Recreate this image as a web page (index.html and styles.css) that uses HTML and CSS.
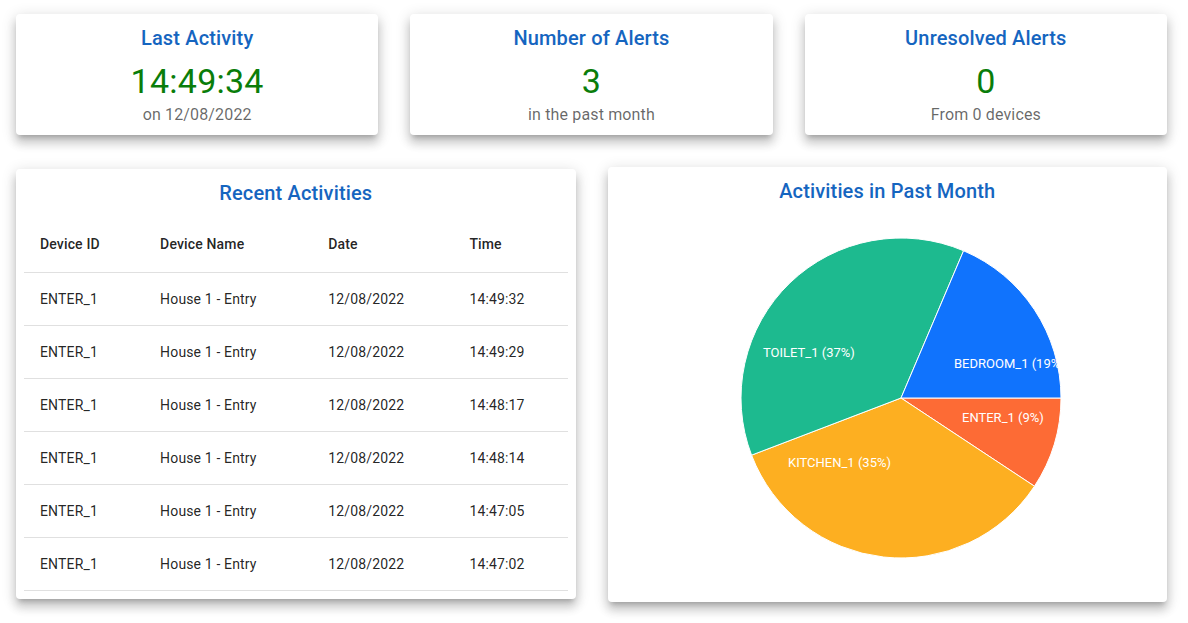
FILE: index.html
```html
<!DOCTYPE html>
<html lang="en">
<head>
<meta charset="utf-8">
<title>Dashboard</title>
<link rel="stylesheet" href="styles.css">
</head>
<body>
<div class="page">
  <section class="stats">
    <div class="card stat">
      <h2 class="card-title">Last Activity</h2>
      <div class="stat-value">14:49:34</div>
      <div class="stat-sub">on 12/08/2022</div>
    </div>
    <div class="card stat">
      <h2 class="card-title">Number of Alerts</h2>
      <div class="stat-value">3</div>
      <div class="stat-sub">in the past month</div>
    </div>
    <div class="card stat">
      <h2 class="card-title">Unresolved Alerts</h2>
      <div class="stat-value">0</div>
      <div class="stat-sub">From 0 devices</div>
    </div>
  </section>

  <section class="panels">
    <div class="card table-card">
      <h2 class="card-title">Recent Activities</h2>
      <table class="activity-table">
        <colgroup>
          <col class="c1"><col class="c2"><col class="c3"><col class="c4">
        </colgroup>
        <thead>
          <tr><th>Device ID</th><th>Device Name</th><th>Date</th><th>Time</th></tr>
        </thead>
        <tbody>
          <tr><td>ENTER_1</td><td>House 1 - Entry</td><td>12/08/2022</td><td>14:49:32</td></tr>
          <tr><td>ENTER_1</td><td>House 1 - Entry</td><td>12/08/2022</td><td>14:49:29</td></tr>
          <tr><td>ENTER_1</td><td>House 1 - Entry</td><td>12/08/2022</td><td>14:48:17</td></tr>
          <tr><td>ENTER_1</td><td>House 1 - Entry</td><td>12/08/2022</td><td>14:48:14</td></tr>
          <tr><td>ENTER_1</td><td>House 1 - Entry</td><td>12/08/2022</td><td>14:47:05</td></tr>
          <tr><td>ENTER_1</td><td>House 1 - Entry</td><td>12/08/2022</td><td>14:47:02</td></tr>
        </tbody>
      </table>
    </div>

    <div class="card chart-card">
      <h2 class="card-title">Activities in Past Month</h2>
      <div class="chart-area">
        <svg class="pie" width="320" height="320" viewBox="0 0 320 320">
          <g stroke="#ffffff" stroke-width="1" stroke-linejoin="round">
            <path fill="#fd6b35" d="M160,160 L320,160 A160,160 0 0,1 293.47,248.23 Z"/>
            <path fill="#fdaf21" d="M160,160 L293.47,248.23 A160,160 0 0,1 10.56,217.15 Z"/>
            <path fill="#1dba8f" d="M160,160 L10.56,217.15 A160,160 0 0,1 222.58,12.75 Z"/>
            <path fill="#1073fd" d="M160,160 L222.58,12.75 A160,160 0 0,1 320,160 Z"/>
          </g>
          <g class="pie-labels">
            <text x="22" y="119">TOILET_1 (37%)</text>
            <text x="213" y="130">BEDROOM_1 (19%)</text>
            <text x="221" y="184">ENTER_1 (9%)</text>
            <text x="47" y="229">KITCHEN_1 (35%)</text>
          </g>
        </svg>
      </div>
    </div>
  </section>
</div>
</body>
</html>
```

FILE: styles.css
```css
* {
  box-sizing: border-box;
}

html, body {
  margin: 0;
  padding: 0;
  background: #ffffff;
}

body {
  font-family: Roboto, "Noto Sans", "Liberation Sans", sans-serif;
  color: rgba(0, 0, 0, 0.87);
}

.page {
  width: 1151px;
  margin-left: 16px;
  padding-top: 14px;
  padding-bottom: 21px;
}

.card {
  background: #ffffff;
  border-radius: 4px;
  box-shadow:
    0 5px 5px -3px rgba(0, 0, 0, 0.2),
    0 8px 10px 1px rgba(0, 0, 0, 0.14),
    0 3px 14px 2px rgba(0, 0, 0, 0.12);
}

.card-title {
  margin: 0;
  font-size: 20px;
  font-weight: 500;
  line-height: 32px;
  letter-spacing: 0.15px;
  color: #1565c0;
  text-align: center;
}

/* stat cards */
.stats {
  display: grid;
  grid-template-columns: repeat(3, 1fr);
  column-gap: 32px;
}

.stat {
  padding: 8px 8px 8px;
  text-align: center;
}

.stat .card-title {
  margin-bottom: 6px;
}

.stat-value {
  font-size: 34px;
  line-height: 43px;
  font-weight: 400;
  letter-spacing: 0.25px;
  color: #0a7d0a;
}

.stat-sub {
  font-size: 16px;
  line-height: 24px;
  letter-spacing: 0.15px;
  color: rgba(0, 0, 0, 0.6);
}

/* lower panels */
.panels {
  display: grid;
  grid-template-columns: 1fr 1fr;
  column-gap: 32px;
  align-items: start;
  margin-top: 32px;
}

.table-card {
  margin-top: 2px;
  padding: 8px;
}

.table-card .card-title {
  margin-bottom: 7px;
}

.activity-table {
  width: 100%;
  border-collapse: collapse;
  table-layout: fixed;
  font-size: 14px;
}

.activity-table .c1 { width: 120px; }
.activity-table .c2 { width: 168px; }
.activity-table .c3 { width: 141px; }
.activity-table .c4 { width: 114px; }

.activity-table th,
.activity-table td {
  padding: 16px;
  text-align: left;
  border-bottom: 1px solid #e0e0e0;
  color: rgba(0, 0, 0, 0.87);
  letter-spacing: 0.15px;
  white-space: nowrap;
}

.activity-table th {
  font-weight: 500;
  line-height: 24px;
}

.activity-table td {
  font-weight: 400;
  line-height: 20px;
}

.chart-card {
  padding: 8px 8px 44px;
}

.chart-area {
  display: flex;
  justify-content: center;
  padding-left: 27px;
  margin-top: 31px;
}

.pie {
  display: block;
  overflow: hidden;
}

.pie-labels text {
  fill: #ffffff;
  font-family: Roboto, "Noto Sans", sans-serif;
  font-size: 13px;
}
```
